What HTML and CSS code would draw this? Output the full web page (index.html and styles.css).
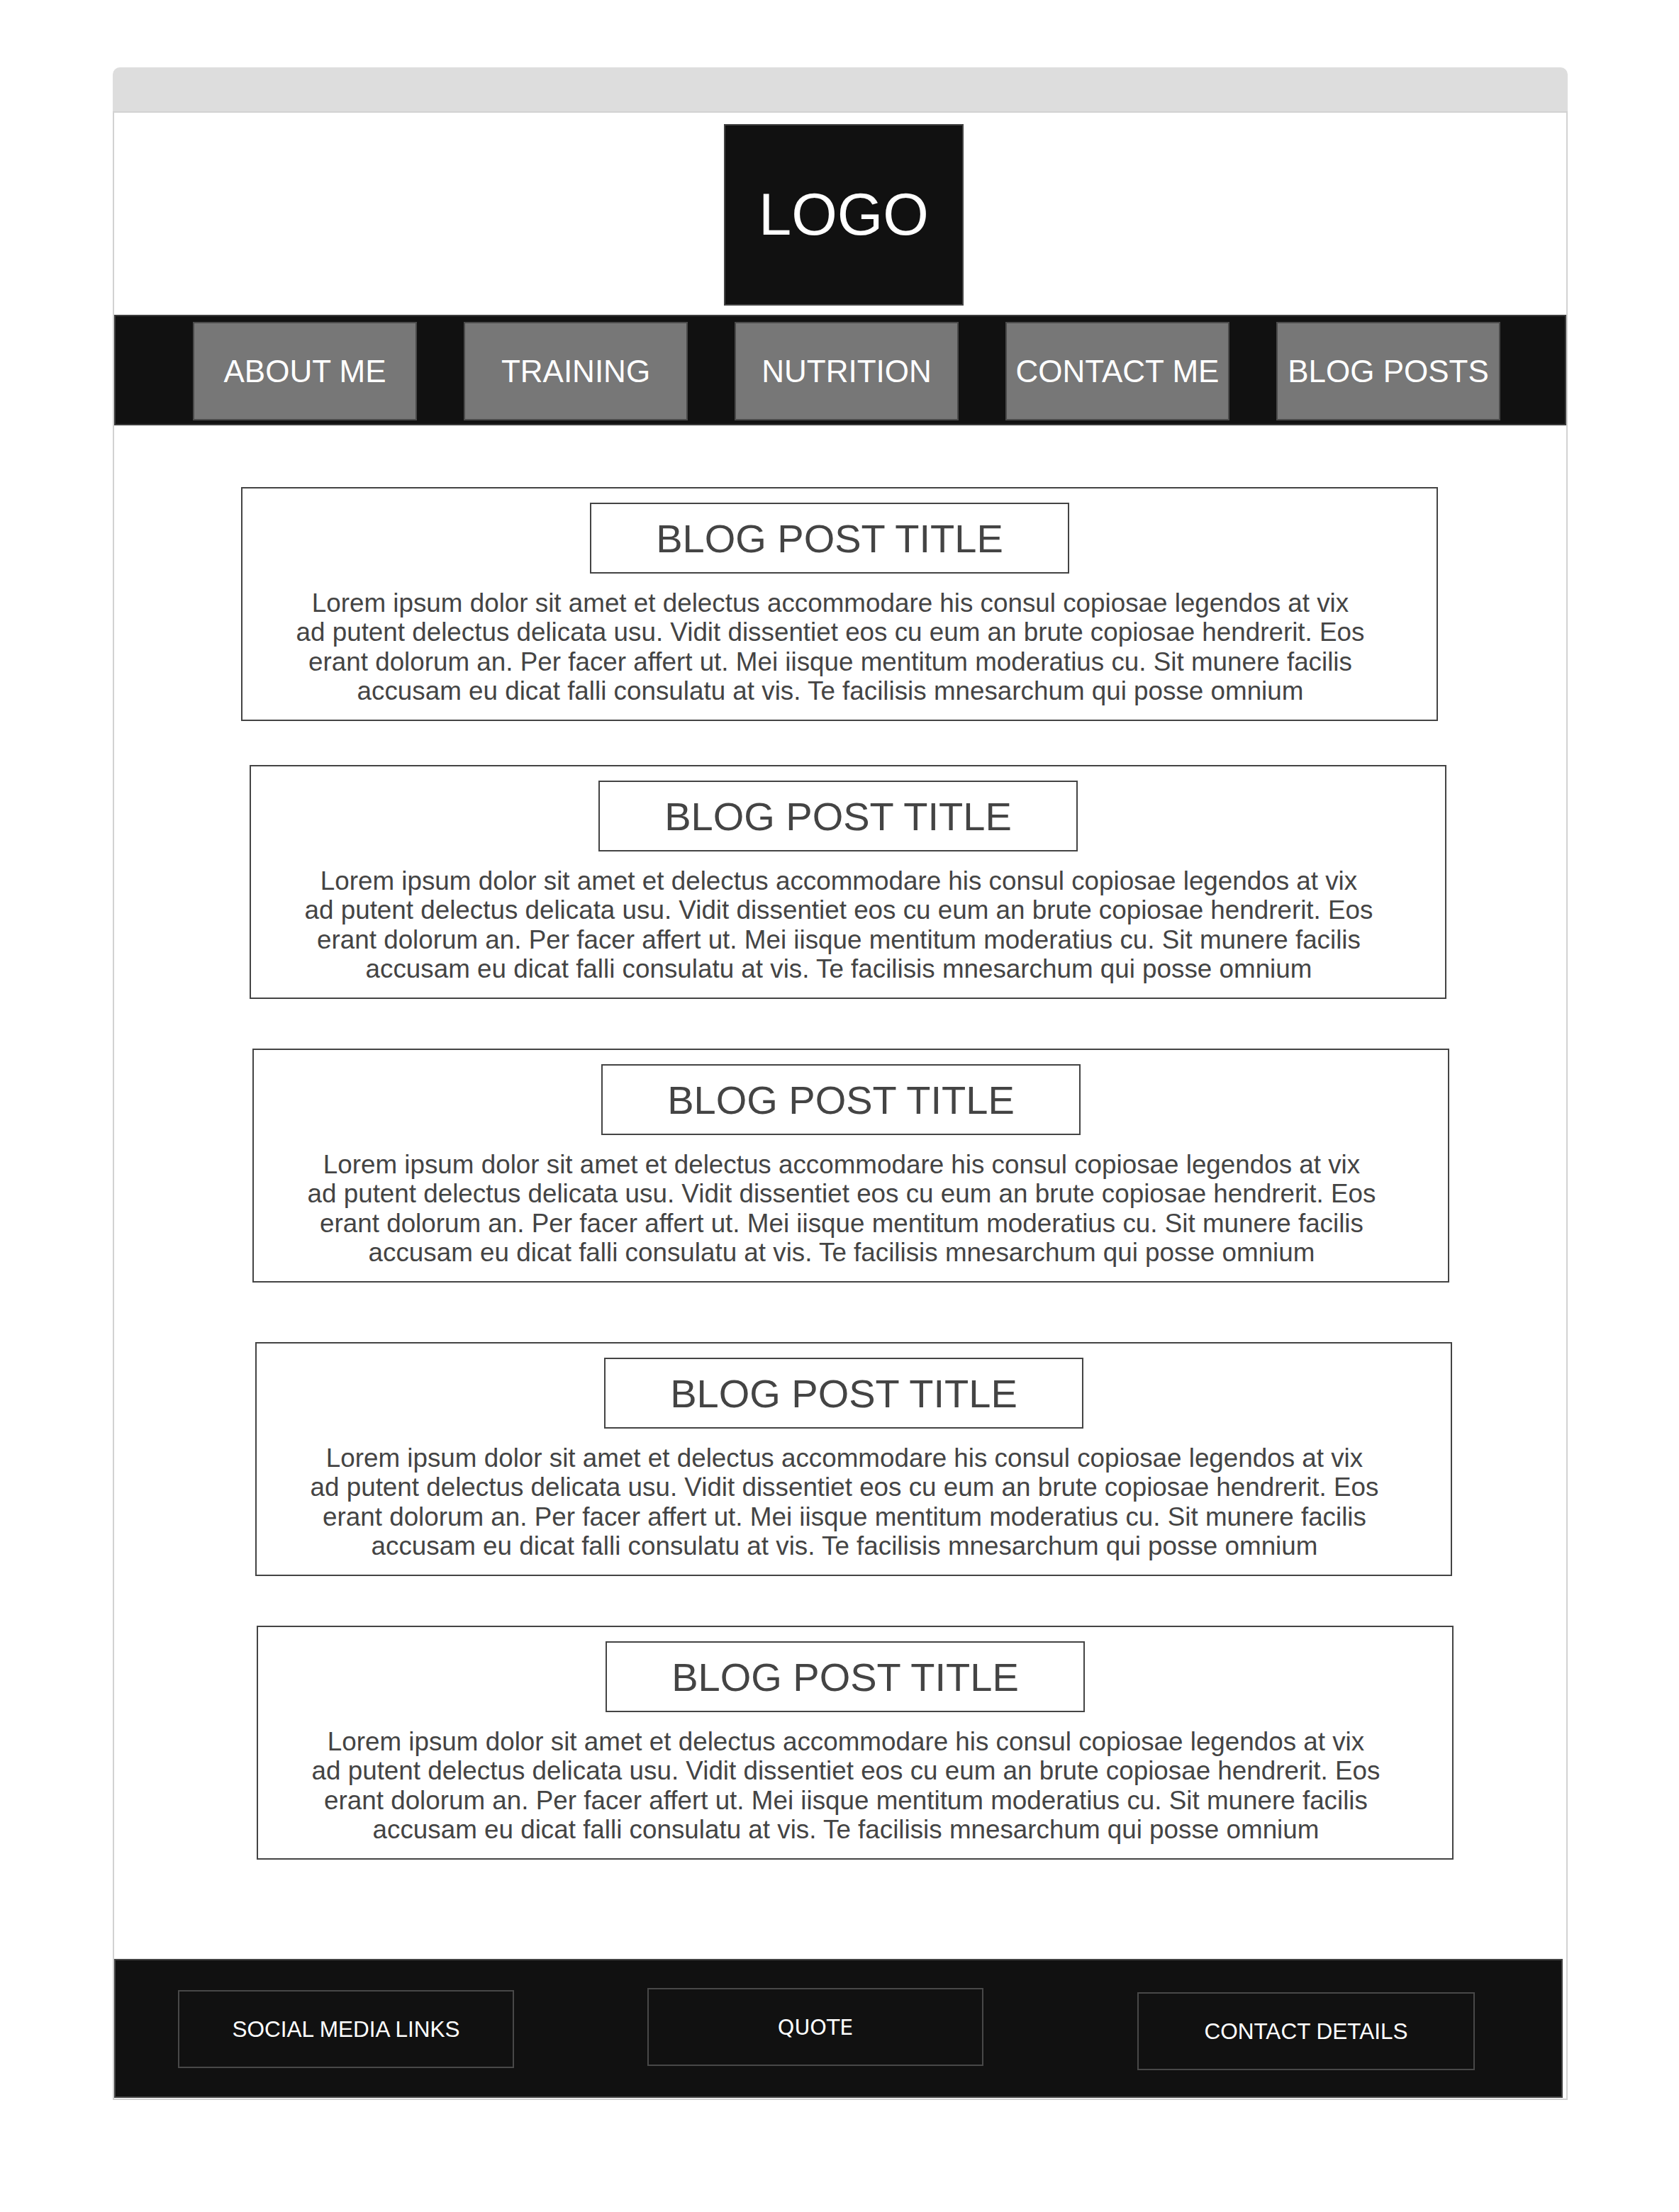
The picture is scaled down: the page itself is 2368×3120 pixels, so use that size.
FILE: index.html
```html
<!DOCTYPE html>
<html lang="en">
<head>
<meta charset="utf-8">
<title>Blog wireframe</title>
<link rel="stylesheet" href="styles.css">
</head>
<body>
<div class="page">
  <div class="browser-bar"></div>
  <div class="frame">
    <header class="header">
      <div class="logo">LOGO</div>
    </header>
    <nav class="nav">
      <div class="nav-btn">ABOUT ME</div>
      <div class="nav-btn">TRAINING</div>
      <div class="nav-btn">NUTRITION</div>
      <div class="nav-btn">CONTACT ME</div>
      <div class="nav-btn">BLOG POSTS</div>
    </nav>
    <main class="main">
      <article class="card card--1">
        <div class="card-title">BLOG POST TITLE</div>
        <p class="card-text">Lorem ipsum dolor sit amet et delectus accommodare his consul copiosae legendos at vix<br>ad putent delectus delicata usu. Vidit dissentiet eos cu eum an brute copiosae hendrerit. Eos<br>erant dolorum an. Per facer affert ut. Mei iisque mentitum moderatius cu. Sit munere facilis<br>accusam eu dicat falli consulatu at vis. Te facilisis mnesarchum qui posse omnium</p>
      </article>
      <article class="card card--2">
        <div class="card-title">BLOG POST TITLE</div>
        <p class="card-text">Lorem ipsum dolor sit amet et delectus accommodare his consul copiosae legendos at vix<br>ad putent delectus delicata usu. Vidit dissentiet eos cu eum an brute copiosae hendrerit. Eos<br>erant dolorum an. Per facer affert ut. Mei iisque mentitum moderatius cu. Sit munere facilis<br>accusam eu dicat falli consulatu at vis. Te facilisis mnesarchum qui posse omnium</p>
      </article>
      <article class="card card--3">
        <div class="card-title">BLOG POST TITLE</div>
        <p class="card-text">Lorem ipsum dolor sit amet et delectus accommodare his consul copiosae legendos at vix<br>ad putent delectus delicata usu. Vidit dissentiet eos cu eum an brute copiosae hendrerit. Eos<br>erant dolorum an. Per facer affert ut. Mei iisque mentitum moderatius cu. Sit munere facilis<br>accusam eu dicat falli consulatu at vis. Te facilisis mnesarchum qui posse omnium</p>
      </article>
      <article class="card card--4">
        <div class="card-title">BLOG POST TITLE</div>
        <p class="card-text">Lorem ipsum dolor sit amet et delectus accommodare his consul copiosae legendos at vix<br>ad putent delectus delicata usu. Vidit dissentiet eos cu eum an brute copiosae hendrerit. Eos<br>erant dolorum an. Per facer affert ut. Mei iisque mentitum moderatius cu. Sit munere facilis<br>accusam eu dicat falli consulatu at vis. Te facilisis mnesarchum qui posse omnium</p>
      </article>
      <article class="card card--5">
        <div class="card-title">BLOG POST TITLE</div>
        <p class="card-text">Lorem ipsum dolor sit amet et delectus accommodare his consul copiosae legendos at vix<br>ad putent delectus delicata usu. Vidit dissentiet eos cu eum an brute copiosae hendrerit. Eos<br>erant dolorum an. Per facer affert ut. Mei iisque mentitum moderatius cu. Sit munere facilis<br>accusam eu dicat falli consulatu at vis. Te facilisis mnesarchum qui posse omnium</p>
      </article>
    </main>
    <footer class="footer">
      <div class="fbox fbox--social">SOCIAL MEDIA LINKS</div>
      <div class="fbox fbox--quote">QUOTE</div>
      <div class="fbox fbox--contact">CONTACT DETAILS</div>
    </footer>
  </div>
</div>
</body>
</html>
```

FILE: styles.css
```css
html, body {
  margin: 0;
  padding: 0;
  background: #ffffff;
}

body {
  font-family: "Liberation Sans", Arial, sans-serif;
}

.page {
  padding: 95px 0 0 159px;
}

.browser-bar {
  width: 2052px;
  height: 62px;
  background: #dddddd;
  border-radius: 10px 10px 0 0;
}

.frame {
  width: 2052px;
  box-sizing: border-box;
  border: 2px solid #d2d2d2;
  padding-bottom: 1px;
  background: #ffffff;
}

.header {
  display: flex;
  padding: 16px 0 13px 860px;
}

.logo {
  width: 338px;
  height: 256px;
  box-sizing: border-box;
  border: 2px solid #444444;
  background: #111111;
  color: #ffffff;
  font-size: 83px;
  display: flex;
  align-items: center;
  justify-content: center;
}

.nav {
  height: 156px;
  box-sizing: border-box;
  border: 2px solid #3c3c3c;
  background: #111111;
  display: flex;
  align-items: flex-start;
  gap: 66px;
  padding: 8px 0 0 109px;
}

.nav-btn {
  width: 316px;
  height: 139px;
  box-sizing: border-box;
  border: 2px solid #4a4a4a;
  background: #777777;
  color: #ffffff;
  font-size: 44px;
  display: flex;
  align-items: center;
  justify-content: center;
  white-space: nowrap;
}

.main {
  padding-top: 87px;
}

.card {
  width: 1688px;
  height: 330px;
  box-sizing: border-box;
  border: 2px solid #444444;
  padding: 20px 26px 0 0;
}

.card--1 { margin-left: 179px; }
.card--2 { margin-left: 191px; margin-top: 62px; }
.card--3 { margin-left: 195px; margin-top: 70px; }
.card--4 { margin-left: 199px; margin-top: 84px; }
.card--5 { margin-left: 201px; margin-top: 70px; }

.card-title {
  width: 676px;
  height: 100px;
  box-sizing: border-box;
  border: 2px solid #444444;
  margin: 0 auto;
  position: relative;
  left: -1px;
  display: flex;
  align-items: center;
  justify-content: center;
  font-size: 56px;
  color: #444444;
  white-space: nowrap;
}

.card-text {
  margin: 21px 0 0 0;
  font-size: 36.8px;
  line-height: 41.3px;
  text-align: center;
  color: #444444;
  white-space: nowrap;
}

.footer {
  margin-top: 140px;
  width: 2043px;
  height: 196px;
  box-sizing: border-box;
  border: 2px solid #444444;
  background: #111111;
  display: flex;
  align-items: flex-start;
  padding-left: 88px;
}

.fbox {
  width: 474px;
  height: 110px;
  box-sizing: border-box;
  border: 2px solid #484848;
  color: #ffffff;
  font-size: 31.5px;
  display: flex;
  align-items: center;
  justify-content: center;
  white-space: nowrap;
}

.fbox--social {
  margin-top: 42px;
}

.fbox--quote {
  margin-left: 188px;
  margin-top: 39px;
  font-family: "DejaVu Sans", sans-serif;
  font-size: 30px;
}

.fbox--contact {
  margin-left: 217px;
  margin-top: 45px;
  width: 476px;
}
```
